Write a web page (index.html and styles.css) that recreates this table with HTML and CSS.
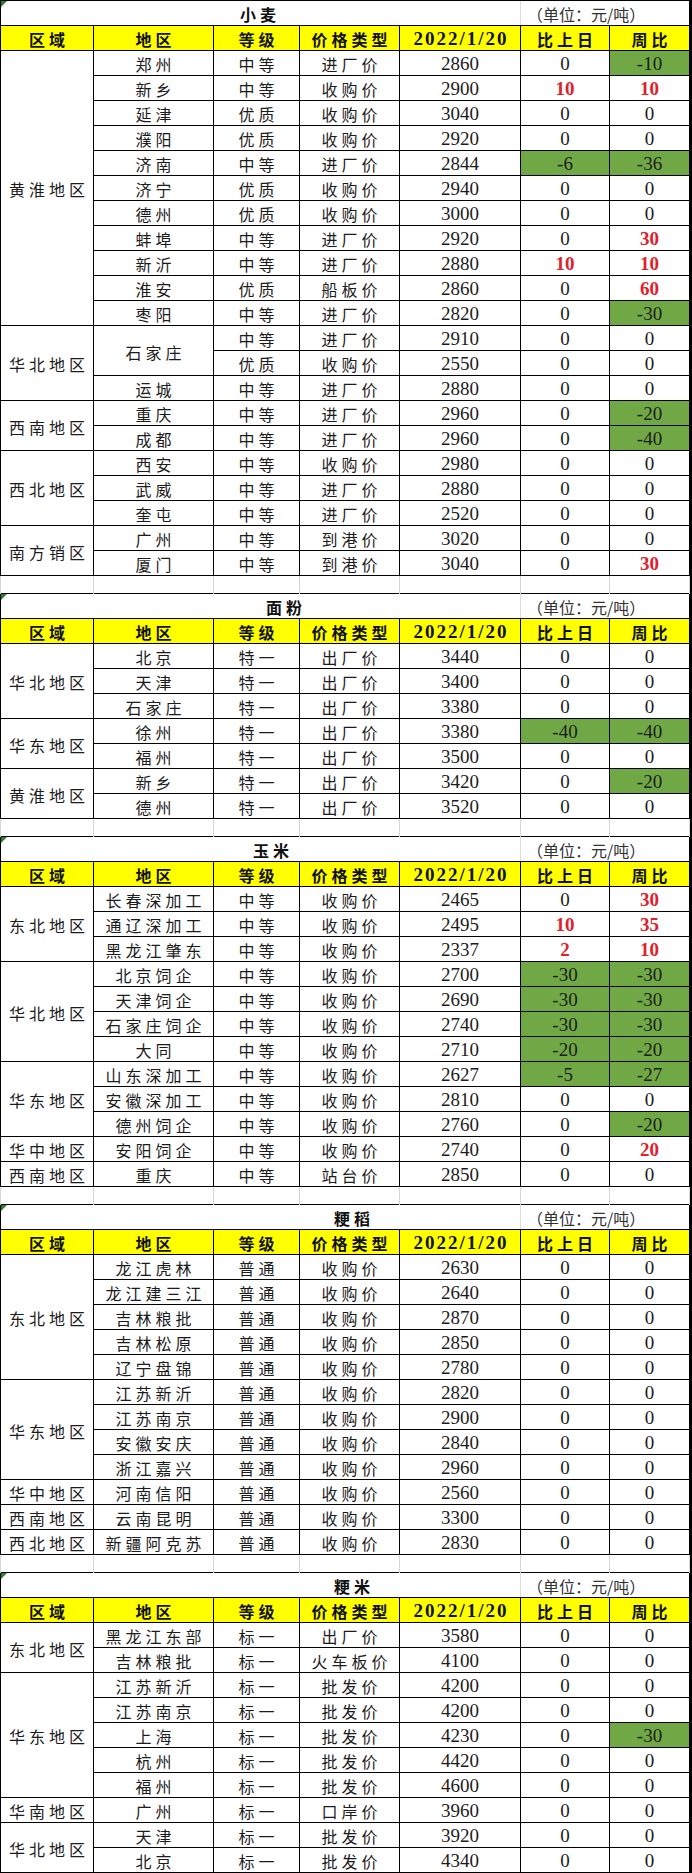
FILE: index.html
```html
<!DOCTYPE html>
<html lang="zh-CN">
<head>
<meta charset="utf-8">
<title>粮食价格</title>
<link rel="stylesheet" href="styles.css">
</head>
<body>
<div class="sheet">
<table class="grid">
<colgroup>
<col class="c1"><col class="c2"><col class="c3"><col class="c4"><col class="c5"><col class="c6"><col class="c7">
</colgroup>
<tbody>
<tr class="t"><td colspan="5" class="ttl wheat">小麦</td><td colspan="2" class="unit">（单位：元/吨）</td></tr>
<tr class="h"><td>区域</td><td>地区</td><td>等级</td><td>价格类型</td><td class="date">2022/1/20</td><td>比上日</td><td>周比</td></tr>
<tr><td rowspan="11">黄淮地区</td><td>郑州</td><td>中等</td><td>进厂价</td><td>2860</td><td>0</td><td class="g">-10</td></tr>
<tr><td>新乡</td><td>中等</td><td>收购价</td><td>2900</td><td class="r">10</td><td class="r">10</td></tr>
<tr><td>延津</td><td>优质</td><td>收购价</td><td>3040</td><td>0</td><td>0</td></tr>
<tr><td>濮阳</td><td>优质</td><td>收购价</td><td>2920</td><td>0</td><td>0</td></tr>
<tr><td>济南</td><td>中等</td><td>进厂价</td><td>2844</td><td class="g">-6</td><td class="g">-36</td></tr>
<tr><td>济宁</td><td>优质</td><td>收购价</td><td>2940</td><td>0</td><td>0</td></tr>
<tr><td>德州</td><td>优质</td><td>收购价</td><td>3000</td><td>0</td><td>0</td></tr>
<tr><td>蚌埠</td><td>中等</td><td>进厂价</td><td>2920</td><td>0</td><td class="r">30</td></tr>
<tr><td>新沂</td><td>中等</td><td>进厂价</td><td>2880</td><td class="r">10</td><td class="r">10</td></tr>
<tr><td>淮安</td><td>优质</td><td>船板价</td><td>2860</td><td>0</td><td class="r">60</td></tr>
<tr><td>枣阳</td><td>中等</td><td>进厂价</td><td>2820</td><td>0</td><td class="g">-30</td></tr>
<tr><td rowspan="3">华北地区</td><td rowspan="2">石家庄</td><td>中等</td><td>进厂价</td><td>2910</td><td>0</td><td>0</td></tr>
<tr><td>优质</td><td>收购价</td><td>2550</td><td>0</td><td>0</td></tr>
<tr><td>运城</td><td>中等</td><td>进厂价</td><td>2880</td><td>0</td><td>0</td></tr>
<tr><td rowspan="2">西南地区</td><td>重庆</td><td>中等</td><td>进厂价</td><td>2960</td><td>0</td><td class="g">-20</td></tr>
<tr><td>成都</td><td>中等</td><td>进厂价</td><td>2960</td><td>0</td><td class="g">-40</td></tr>
<tr><td rowspan="3">西北地区</td><td>西安</td><td>中等</td><td>收购价</td><td>2980</td><td>0</td><td>0</td></tr>
<tr><td>武威</td><td>中等</td><td>进厂价</td><td>2880</td><td>0</td><td>0</td></tr>
<tr><td>奎屯</td><td>中等</td><td>进厂价</td><td>2520</td><td>0</td><td>0</td></tr>
<tr><td rowspan="2">南方销区</td><td>广州</td><td>中等</td><td>到港价</td><td>3020</td><td>0</td><td>0</td></tr>
<tr><td>厦门</td><td>中等</td><td>到港价</td><td>3040</td><td>0</td><td class="r">30</td></tr>
<tr class="b"><td></td><td></td><td></td><td></td><td></td><td></td><td></td></tr>

<tr class="t"><td colspan="5" class="ttl flour">面粉</td><td colspan="2" class="unit">（单位：元/吨）</td></tr>
<tr class="h"><td>区域</td><td>地区</td><td>等级</td><td>价格类型</td><td class="date">2022/1/20</td><td>比上日</td><td>周比</td></tr>
<tr><td rowspan="3">华北地区</td><td>北京</td><td>特一</td><td>出厂价</td><td>3440</td><td>0</td><td>0</td></tr>
<tr><td>天津</td><td>特一</td><td>出厂价</td><td>3400</td><td>0</td><td>0</td></tr>
<tr><td>石家庄</td><td>特一</td><td>出厂价</td><td>3380</td><td>0</td><td>0</td></tr>
<tr><td rowspan="2">华东地区</td><td>徐州</td><td>特一</td><td>出厂价</td><td>3380</td><td class="g">-40</td><td class="g">-40</td></tr>
<tr><td>福州</td><td>特一</td><td>出厂价</td><td>3500</td><td>0</td><td>0</td></tr>
<tr><td rowspan="2">黄淮地区</td><td>新乡</td><td>特一</td><td>出厂价</td><td>3420</td><td>0</td><td class="g">-20</td></tr>
<tr><td>德州</td><td>特一</td><td>出厂价</td><td>3520</td><td>0</td><td>0</td></tr>
<tr class="b"><td></td><td></td><td></td><td></td><td></td><td></td><td></td></tr>

<tr class="t"><td colspan="5" class="ttl corn">玉米</td><td colspan="2" class="unit">（单位：元/吨）</td></tr>
<tr class="h"><td>区域</td><td>地区</td><td>等级</td><td>价格类型</td><td class="date">2022/1/20</td><td>比上日</td><td>周比</td></tr>
<tr><td rowspan="3">东北地区</td><td>长春深加工</td><td>中等</td><td>收购价</td><td>2465</td><td>0</td><td class="r">30</td></tr>
<tr><td>通辽深加工</td><td>中等</td><td>收购价</td><td>2495</td><td class="r">10</td><td class="r">35</td></tr>
<tr><td>黑龙江肇东</td><td>中等</td><td>收购价</td><td>2337</td><td class="r">2</td><td class="r">10</td></tr>
<tr><td rowspan="4">华北地区</td><td>北京饲企</td><td>中等</td><td>收购价</td><td>2700</td><td class="g">-30</td><td class="g">-30</td></tr>
<tr><td>天津饲企</td><td>中等</td><td>收购价</td><td>2690</td><td class="g">-30</td><td class="g">-30</td></tr>
<tr><td>石家庄饲企</td><td>中等</td><td>收购价</td><td>2740</td><td class="g">-30</td><td class="g">-30</td></tr>
<tr><td>大同</td><td>中等</td><td>收购价</td><td>2710</td><td class="g">-20</td><td class="g">-20</td></tr>
<tr><td rowspan="3">华东地区</td><td>山东深加工</td><td>中等</td><td>收购价</td><td>2627</td><td class="g">-5</td><td class="g">-27</td></tr>
<tr><td>安徽深加工</td><td>中等</td><td>收购价</td><td>2810</td><td>0</td><td>0</td></tr>
<tr><td>德州饲企</td><td>中等</td><td>收购价</td><td>2760</td><td>0</td><td class="g">-20</td></tr>
<tr><td>华中地区</td><td>安阳饲企</td><td>中等</td><td>收购价</td><td>2740</td><td>0</td><td class="r">20</td></tr>
<tr><td>西南地区</td><td>重庆</td><td>中等</td><td>站台价</td><td>2850</td><td>0</td><td>0</td></tr>
<tr class="b"><td></td><td></td><td></td><td></td><td></td><td></td><td></td></tr>

<tr class="t"><td colspan="5" class="ttl paddy">粳稻</td><td colspan="2" class="unit">（单位：元/吨）</td></tr>
<tr class="h"><td>区域</td><td>地区</td><td>等级</td><td>价格类型</td><td class="date">2022/1/20</td><td>比上日</td><td>周比</td></tr>
<tr><td rowspan="5">东北地区</td><td>龙江虎林</td><td>普通</td><td>收购价</td><td>2630</td><td>0</td><td>0</td></tr>
<tr><td>龙江建三江</td><td>普通</td><td>收购价</td><td>2640</td><td>0</td><td>0</td></tr>
<tr><td>吉林粮批</td><td>普通</td><td>收购价</td><td>2870</td><td>0</td><td>0</td></tr>
<tr><td>吉林松原</td><td>普通</td><td>收购价</td><td>2850</td><td>0</td><td>0</td></tr>
<tr><td>辽宁盘锦</td><td>普通</td><td>收购价</td><td>2780</td><td>0</td><td>0</td></tr>
<tr><td rowspan="4">华东地区</td><td>江苏新沂</td><td>普通</td><td>收购价</td><td>2820</td><td>0</td><td>0</td></tr>
<tr><td>江苏南京</td><td>普通</td><td>收购价</td><td>2900</td><td>0</td><td>0</td></tr>
<tr><td>安徽安庆</td><td>普通</td><td>收购价</td><td>2840</td><td>0</td><td>0</td></tr>
<tr><td>浙江嘉兴</td><td>普通</td><td>收购价</td><td>2960</td><td>0</td><td>0</td></tr>
<tr><td>华中地区</td><td>河南信阳</td><td>普通</td><td>收购价</td><td>2560</td><td>0</td><td>0</td></tr>
<tr><td>西南地区</td><td>云南昆明</td><td>普通</td><td>收购价</td><td>3300</td><td>0</td><td>0</td></tr>
<tr><td>西北地区</td><td>新疆阿克苏</td><td>普通</td><td>收购价</td><td>2830</td><td>0</td><td>0</td></tr>
<tr class="b"><td></td><td></td><td></td><td></td><td></td><td></td><td></td></tr>

<tr class="t"><td colspan="5" class="ttl rice">粳米</td><td colspan="2" class="unit">（单位：元/吨）</td></tr>
<tr class="h"><td>区域</td><td>地区</td><td>等级</td><td>价格类型</td><td class="date">2022/1/20</td><td>比上日</td><td>周比</td></tr>
<tr><td rowspan="2">东北地区</td><td>黑龙江东部</td><td>标一</td><td>出厂价</td><td>3580</td><td>0</td><td>0</td></tr>
<tr><td>吉林粮批</td><td>标一</td><td>火车板价</td><td>4100</td><td>0</td><td>0</td></tr>
<tr><td rowspan="5">华东地区</td><td>江苏新沂</td><td>标一</td><td>批发价</td><td>4200</td><td>0</td><td>0</td></tr>
<tr><td>江苏南京</td><td>标一</td><td>批发价</td><td>4200</td><td>0</td><td>0</td></tr>
<tr><td>上海</td><td>标一</td><td>批发价</td><td>4230</td><td>0</td><td class="g">-30</td></tr>
<tr><td>杭州</td><td>标一</td><td>批发价</td><td>4420</td><td>0</td><td>0</td></tr>
<tr><td>福州</td><td>标一</td><td>批发价</td><td>4600</td><td>0</td><td>0</td></tr>
<tr><td>华南地区</td><td>广州</td><td>标一</td><td>口岸价</td><td>3960</td><td>0</td><td>0</td></tr>
<tr><td rowspan="2">华北地区</td><td>天津</td><td>标一</td><td>批发价</td><td>3920</td><td>0</td><td>0</td></tr>
<tr><td>北京</td><td>标一</td><td>批发价</td><td>4340</td><td>0</td><td>0</td></tr>
</tbody>
</table>
</div>
</body>
</html>
```

FILE: styles.css
```css
html, body {
  margin: 0;
  padding: 0;
  background: #fff;
}

.sheet {
  width: 692px;
  box-sizing: border-box;
  border-right: 3px solid #000;
}

.grid {
  width: 689px;
  border-collapse: collapse;
  table-layout: fixed;
  font-family: "Noto Sans CJK SC", sans-serif;
  color: #1c1c1c;
}

.c1 { width: 93px; }
.c2 { width: 120px; }
.c3 { width: 86px; }
.c4 { width: 100px; }
.c5 { width: 121px; }
.c6 { width: 89px; }
.c7 { width: 80px; }

.grid tr {
  height: 25px;
}

.grid td {
  border: 1px solid #000;
  padding: 2px 0 0 4px;
  text-align: center;
  vertical-align: middle;
  font-size: 16px;
  letter-spacing: 4px;
  line-height: 20px;
  white-space: nowrap;
  overflow: hidden;
}

.grid td:nth-last-child(-n+3) {
  font-family: "Liberation Serif", serif;
  font-size: 19px;
  letter-spacing: 0;
  padding-left: 0;
}

.grid td.g {
  background: #70a845;
}

.grid td.r {
  color: #e0202a;
  font-weight: bold;
}

/* header row */
.grid .h td {
  background: #ffff00;
  font-weight: bold;
  color: #111;
}

.grid .h td:nth-last-child(-n+2) {
  font-family: "Noto Sans CJK SC", sans-serif;
  font-size: 16px;
  letter-spacing: 4px;
  padding-left: 4px;
}

.grid .h td.date {
  font-family: "Liberation Serif", serif;
  font-size: 19px;
  letter-spacing: 2px;
  padding-left: 2px;
}

/* title row */
.grid .t td {
  font-family: "Noto Sans CJK SC", sans-serif;
  text-align: left;
  vertical-align: bottom;
  padding-top: 0;
  padding-bottom: 1px;
}

.grid .t td.ttl {
  position: relative;
  border-right: none;
  font-weight: bold;
  font-size: 16px;
  letter-spacing: 4px;
  color: #111;
}

.grid .t td.ttl::before {
  content: "";
  position: absolute;
  left: 0;
  top: 0;
  border-top: 6px solid #2f7d32;
  border-right: 6px solid transparent;
}

.grid .t td.wheat { padding-left: 239px; }
.grid .t td.flour { padding-left: 265px; }
.grid .t td.corn { padding-left: 252px; }
.grid .t td.paddy { padding-left: 333px; }
.grid .t td.rice { padding-left: 333px; }

.grid .t td.unit {
  border-left: 1px solid #dcdcdc;
  padding-left: 6px;
  font-size: 16px;
  letter-spacing: 0;
  color: #333;
}

/* blank spacer rows */
.grid tr.b {
  height: 18px;
}

.grid .b td {
  border-top: none;
  border-bottom: none;
  border-left: 1px solid #d6d6d6;
  border-right: 1px solid #d6d6d6;
  padding: 0;
}
```
